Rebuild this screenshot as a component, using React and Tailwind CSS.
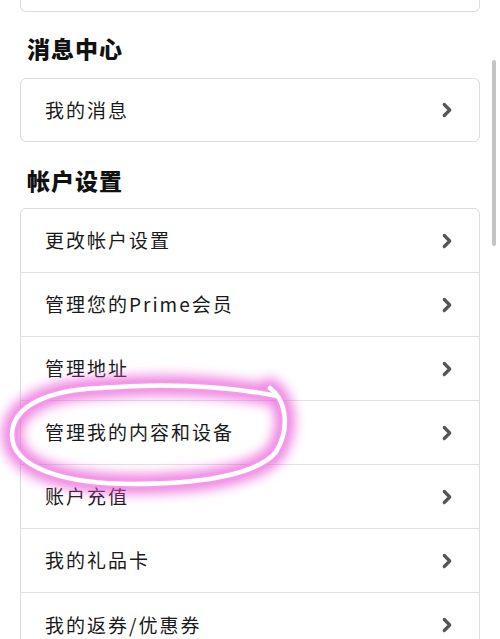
import { ChevronRight } from "lucide-react";

const font = { fontFamily: '"Noto Sans CJK SC", "Noto Sans", sans-serif' };

const accountItems = [
  "更改帐户设置",
  "管理您的Prime会员",
  "管理地址",
  "管理我的内容和设备",
  "账户充值",
  "我的礼品卡",
  "我的返券/优惠券",
];

function Row({ label, tall = true }) {
  return (
    <div
      className={`flex ${tall ? "h-[64px]" : "h-[62px]"} items-center justify-between pl-[24px] pr-[21px]`}
    >
      <span className="text-[19px] tracking-[2px] text-[#1a1a1a]">{label}</span>
      <ChevronRight className="h-[22px] w-[22px] text-[#555]" strokeWidth={3.5} />
    </div>
  );
}

function Heading({ children, top, bottom }) {
  return (
    <h2
      className={`${top} ${bottom} pl-[7px] text-[23px] leading-[28px] font-black tracking-[1px] text-[#111]`}
    >
      {children}
    </h2>
  );
}

// 手绘的粉色圈
function Circle() {
  const d =
    "M 270 388 C 284 398, 292 425, 276 452 C 256 476, 195 484, 133 484 C 65 484, 12 468, 12 435 C 12 405, 50 390, 100 388 C 150 384, 215 384, 277 396";
  return (
    <svg
      className="pointer-events-none absolute left-0 top-0"
      width="500"
      height="639"
      viewBox="0 0 500 639"
    >
      <defs>
        <filter id="glow" x="-30%" y="-30%" width="160%" height="160%">
          <feGaussianBlur stdDeviation="6" />
        </filter>
      </defs>
      <path d={d} fill="none" stroke="#e94fd6" strokeWidth="20" strokeLinecap="round" opacity="0.7" filter="url(#glow)" />
      <path d={d} fill="none" stroke="#f49be8" strokeWidth="8" strokeLinecap="round" />
      <path d={d} fill="none" stroke="#ffffff" strokeWidth="4.5" strokeLinecap="round" />
    </svg>
  );
}

export default function App() {
  return (
    <div className="relative h-[639px] w-[500px] overflow-hidden bg-white" style={font}>
      <div className="px-[20px]">
        <div className="h-[12px] rounded-b-md border-x border-b border-[#dcdcdc]" />

        <Heading top="pt-[22px]" bottom="pb-[16px]">消息中心</Heading>
        <div className="rounded-md border border-[#dcdcdc]">
          <Row label="我的消息" tall={false} />
        </div>

        <Heading top="pt-[24px]" bottom="pb-[14px]">帐户设置</Heading>
        <div className="divide-y divide-[#e2e2e2] rounded-md border border-[#dcdcdc]">
          {accountItems.map((item) => (
            <Row key={item} label={item} />
          ))}
        </div>
      </div>

      {/* 滚动条 */}
      <div className="absolute right-[4px] top-[60px] h-[186px] w-[4px] rounded-full bg-[#c4c4c4]" />

      <Circle />
    </div>
  );
}
